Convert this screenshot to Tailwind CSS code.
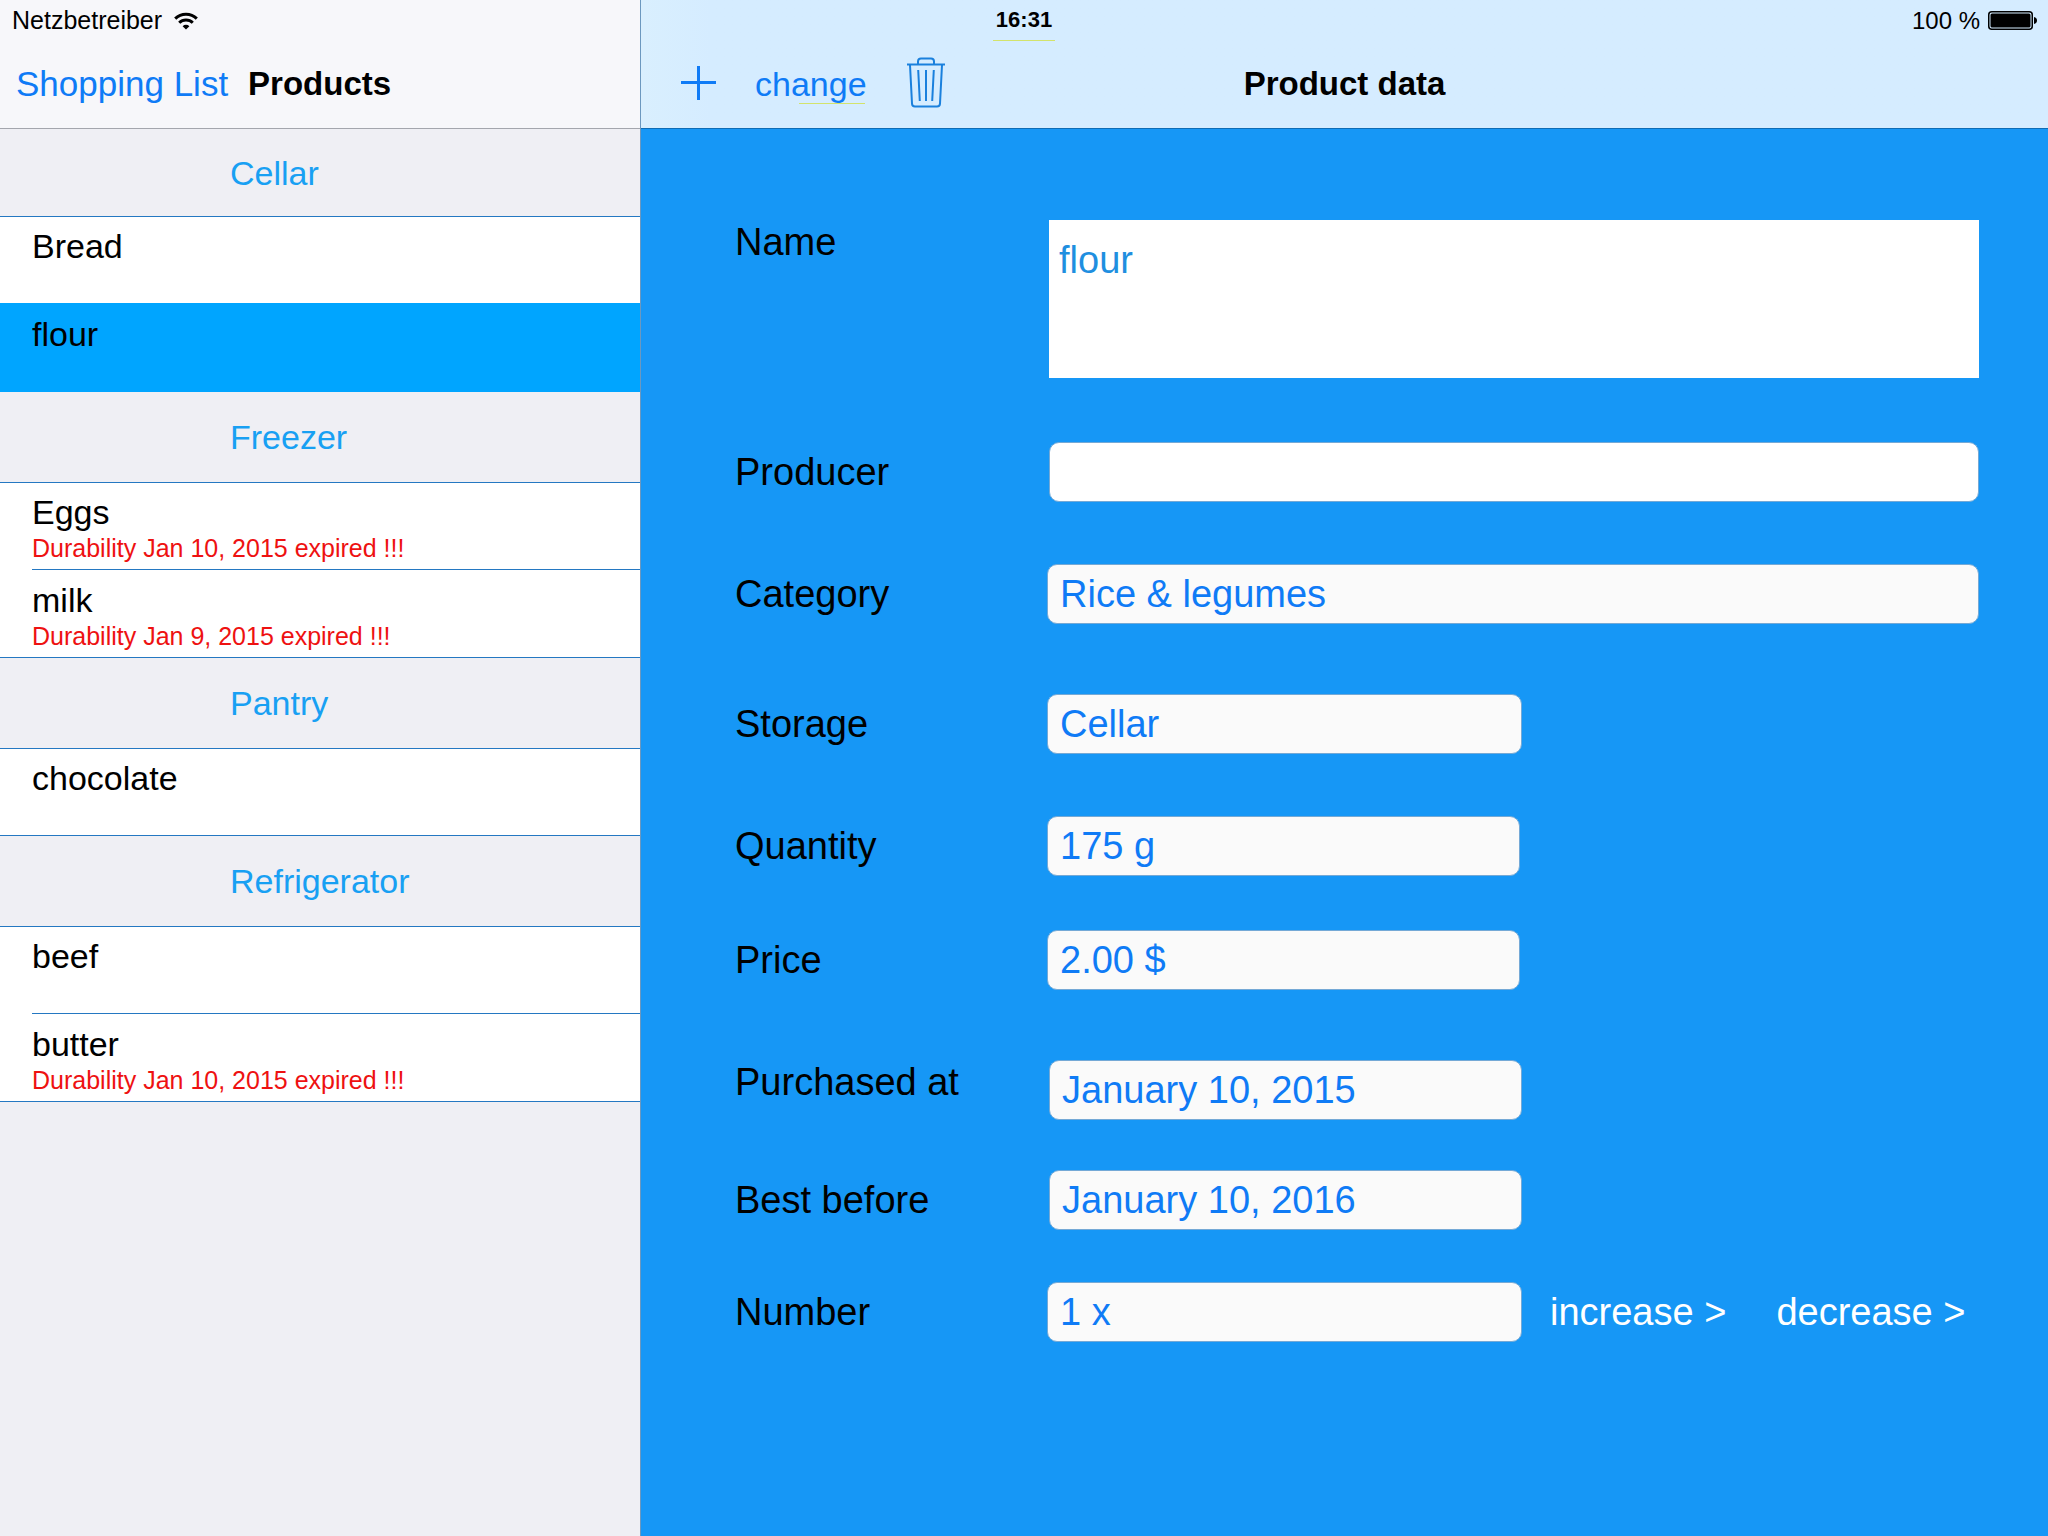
<!DOCTYPE html>
<html lang="en">
<head>
<meta charset="utf-8">
<meta name="viewport" content="width=device-width, initial-scale=1">
<title>Products</title>
<script src="https://cdn.jsdelivr.net/npm/@tailwindcss/browser@4"></script>
</head>
<body class="relative flex min-h-screen bg-[#1697f6] font-['Liberation_Sans',Arial,sans-serif] text-[34px] leading-10 text-black">

  <!-- Status bar, floating over both panes -->
  <div class="pointer-events-none absolute inset-x-0 top-0 z-10 grid h-[41px] grid-cols-3 text-[25px] leading-[41px]">
    <div class="flex items-center gap-3 pl-3">
      <span>Netzbetreiber</span>
      <svg class="h-[18px] w-6" viewBox="0 0 24 18" fill="none" stroke="#000" stroke-width="3" aria-label="Wi-Fi">
        <path d="M1.2 6.6a15.4 15.4 0 0 1 21.6 0"/>
        <path d="M5.2 10.7a9.7 9.7 0 0 1 13.6 0"/>
        <path d="M8.6 14.2a4.9 4.9 0 0 1 6.8 0L12 17.6z" fill="#000" stroke="none"/>
      </svg>
    </div>
    <div class="flex justify-center">
      <span class="border-b border-[#d3e36b] px-[3px] text-[22px] leading-10 font-bold">16:31</span>
    </div>
    <div class="flex items-center justify-end gap-2 pr-[11px]">
      <span class="text-2xl leading-[41px]">100 %</span>
      <svg class="h-[19px] w-[49px]" viewBox="0 0 49 19" aria-label="Battery full">
        <rect x="0.75" y="0.75" width="43.5" height="17.5" rx="3" fill="none" stroke="#000" stroke-width="1.5"/>
        <rect x="2.5" y="2.5" width="40" height="14" rx="1.5"/>
        <path d="M46 6c2 .5 3 1.800 3 3.500s-1 3-3 3.500z"/>
      </svg>
    </div>
  </div>

  <!-- Product list -->
  <aside class="flex w-[641px] shrink-0 flex-col border-r border-[#6c98bf] bg-[#efeff4]">
    <header class="flex h-[129px] items-center gap-5 border-b border-[#a4a6ad] bg-[#f7f7fa] pt-10 pl-4">
      <a href="#" class="text-[35px] text-[#0f7bf6]">Shopping List</a>
      <h1 class="text-[33px] font-bold">Products</h1>
    </header>

    <nav>
      <section>
        <h2 class="flex h-[88px] items-center border-b border-[#2478c2] pl-[230px] text-[#18a0f3]">Cellar</h2>
        <ul>
          <li class="bg-white"><a href="#" class="block h-[86px] pt-[9px] pl-8">Bread</a></li>
          <li class="bg-[#00a5ff]"><a href="#" class="block h-[89px] pt-[11px] pl-8" aria-current="true">flour</a></li>
        </ul>
      </section>
      <section>
        <h2 class="flex h-[91px] items-center border-b border-[#2478c2] pl-[230px] text-[#18a0f3]">Freezer</h2>
        <ul class="border-b border-[#2478c2] bg-white">
          <li class="pl-8"><a href="#" class="block h-[87px] border-b border-[#2478c2] pt-[9px]">Eggs<span class="block text-[25px] leading-8 text-[#ee1111]">Durability Jan 10, 2015 expired !!!</span></a></li>
          <li class="pl-8"><a href="#" class="block h-[87px] pt-[10px]">milk<span class="block text-[25px] leading-8 text-[#ee1111]">Durability Jan 9, 2015 expired !!!</span></a></li>
        </ul>
      </section>
      <section>
        <h2 class="flex h-[91px] items-center border-b border-[#2478c2] pl-[230px] text-[#18a0f3]">Pantry</h2>
        <ul class="border-b border-[#2478c2] bg-white">
          <li class="pl-8"><a href="#" class="block h-[86px] pt-[9px]">chocolate</a></li>
        </ul>
      </section>
      <section>
        <h2 class="flex h-[91px] items-center border-b border-[#2478c2] pl-[230px] text-[#18a0f3]">Refrigerator</h2>
        <ul class="border-b border-[#2478c2] bg-white">
          <li class="pl-8"><a href="#" class="block h-[87px] border-b border-[#2478c2] pt-[9px]">beef</a></li>
          <li class="pl-8"><a href="#" class="block h-[87px] pt-[10px]">butter<span class="block text-[25px] leading-8 text-[#ee1111]">Durability Jan 10, 2015 expired !!!</span></a></li>
        </ul>
      </section>
    </nav>
  </aside>

  <!-- Product details -->
  <main class="flex min-w-0 flex-1 flex-col">
    <header class="grid h-[129px] grid-cols-[1fr_auto_1fr] items-center border-b border-[#0f6cb4] bg-linear-to-r from-[#d9effe] to-[#d5ecff] to-5% pt-10">
      <div class="flex items-center pl-10 text-[#0f7bf6]">
        <button type="button" aria-label="Add product">
          <svg class="block h-9 w-9" viewBox="0 0 36 36" fill="none" stroke="currentColor" stroke-width="3"><path d="M0 16.500h35M17.500 -1v35"/></svg>
        </button>
        <button type="button" class="relative ml-[38px] text-[34px] leading-10">change<span class="absolute right-0.5 bottom-0 h-px w-[66px] bg-[#d3e36b]"></span></button>
        <button type="button" aria-label="Delete product" class="ml-10 text-[#1a80dd]">
          <svg class="block h-[54px] w-[38px]" viewBox="0 0 38 54" fill="none" stroke="currentColor" stroke-width="2">
            <path d="M0 7.500h38M11 7V4.500a3 3 0 0 1 3-3h10a3 3 0 0 1 3 3V7M3 8l2 38.500a3 3 0 0 0 3 3h22a3 3 0 0 0 3-3L35 8M11.200 13l1.600 31M19 13v31M26.800 13l-1.600 31"/>
          </svg>
        </button>
      </div>
      <h1 class="text-[33px] font-bold">Product data</h1>
    </header>

    <form class="flex flex-col pt-[91px] pr-[69px] pl-[94px] text-[38px] leading-[44px]">
      <div class="flex items-start">
        <label for="name" class="w-[314px] shrink-0">Name</label>
        <textarea id="name" class="block h-[158px] min-w-0 flex-1 resize-none bg-white px-2.5 pt-[18px] text-[#1f8fe0] outline-none">flour</textarea>
      </div>
      <div class="mt-16 flex items-center">
        <label for="producer" class="w-[314px] shrink-0">Producer</label>
        <input id="producer" type="text" class="h-[60px] min-w-0 flex-1 rounded-[10px] border border-[#74a9d6] bg-white px-3 text-[#0f7bf6] outline-none">
      </div>
      <div class="mt-[62px] flex items-center">
        <label for="category" class="w-[312px] shrink-0">Category</label>
        <input id="category" type="text" value="Rice &amp; legumes" class="h-[60px] min-w-0 flex-1 rounded-[10px] border border-[#74a9d6] bg-[#fafafa] px-3 text-[#0f7bf6] outline-none">
      </div>
      <div class="mt-[70px] flex items-center">
        <label for="storage" class="w-[312px] shrink-0">Storage</label>
        <input id="storage" type="text" value="Cellar" class="h-[60px] w-[475px] rounded-[10px] border border-[#74a9d6] bg-[#fafafa] px-3 text-[#0f7bf6] outline-none">
      </div>
      <div class="mt-[62px] flex items-center">
        <label for="quantity" class="w-[312px] shrink-0">Quantity</label>
        <input id="quantity" type="text" value="175 g" class="h-[60px] w-[473px] rounded-[10px] border border-[#74a9d6] bg-[#fafafa] px-3 text-[#0f7bf6] outline-none">
      </div>
      <div class="mt-[54px] flex items-center">
        <label for="price" class="w-[312px] shrink-0">Price</label>
        <input id="price" type="text" value="2.00 $" class="h-[60px] w-[473px] rounded-[10px] border border-[#74a9d6] bg-[#fafafa] px-3 text-[#0f7bf6] outline-none">
      </div>
      <div class="mt-[70px] flex items-start">
        <label for="purchased" class="w-[314px] shrink-0">Purchased at</label>
        <input id="purchased" type="text" value="January 10, 2015" class="h-[60px] w-[473px] rounded-[10px] border border-[#74a9d6] bg-[#fafafa] px-3 text-[#0f7bf6] outline-none">
      </div>
      <div class="mt-[50px] flex items-center">
        <label for="best" class="w-[314px] shrink-0">Best before</label>
        <input id="best" type="text" value="January 10, 2016" class="h-[60px] w-[473px] rounded-[10px] border border-[#74a9d6] bg-[#fafafa] px-3 text-[#0f7bf6] outline-none">
      </div>
      <div class="mt-[52px] flex items-center">
        <label for="number" class="w-[312px] shrink-0">Number</label>
        <input id="number" type="text" value="1 x" class="h-[60px] w-[475px] rounded-[10px] border border-[#74a9d6] bg-[#fafafa] px-3 text-[#0f7bf6] outline-none">
        <button type="button" class="ml-7 shrink-0 text-white">increase &gt;</button>
        <button type="button" class="ml-[50px] shrink-0 text-white">decrease &gt;</button>
      </div>
    </form>
  </main>
</body>
</html>
